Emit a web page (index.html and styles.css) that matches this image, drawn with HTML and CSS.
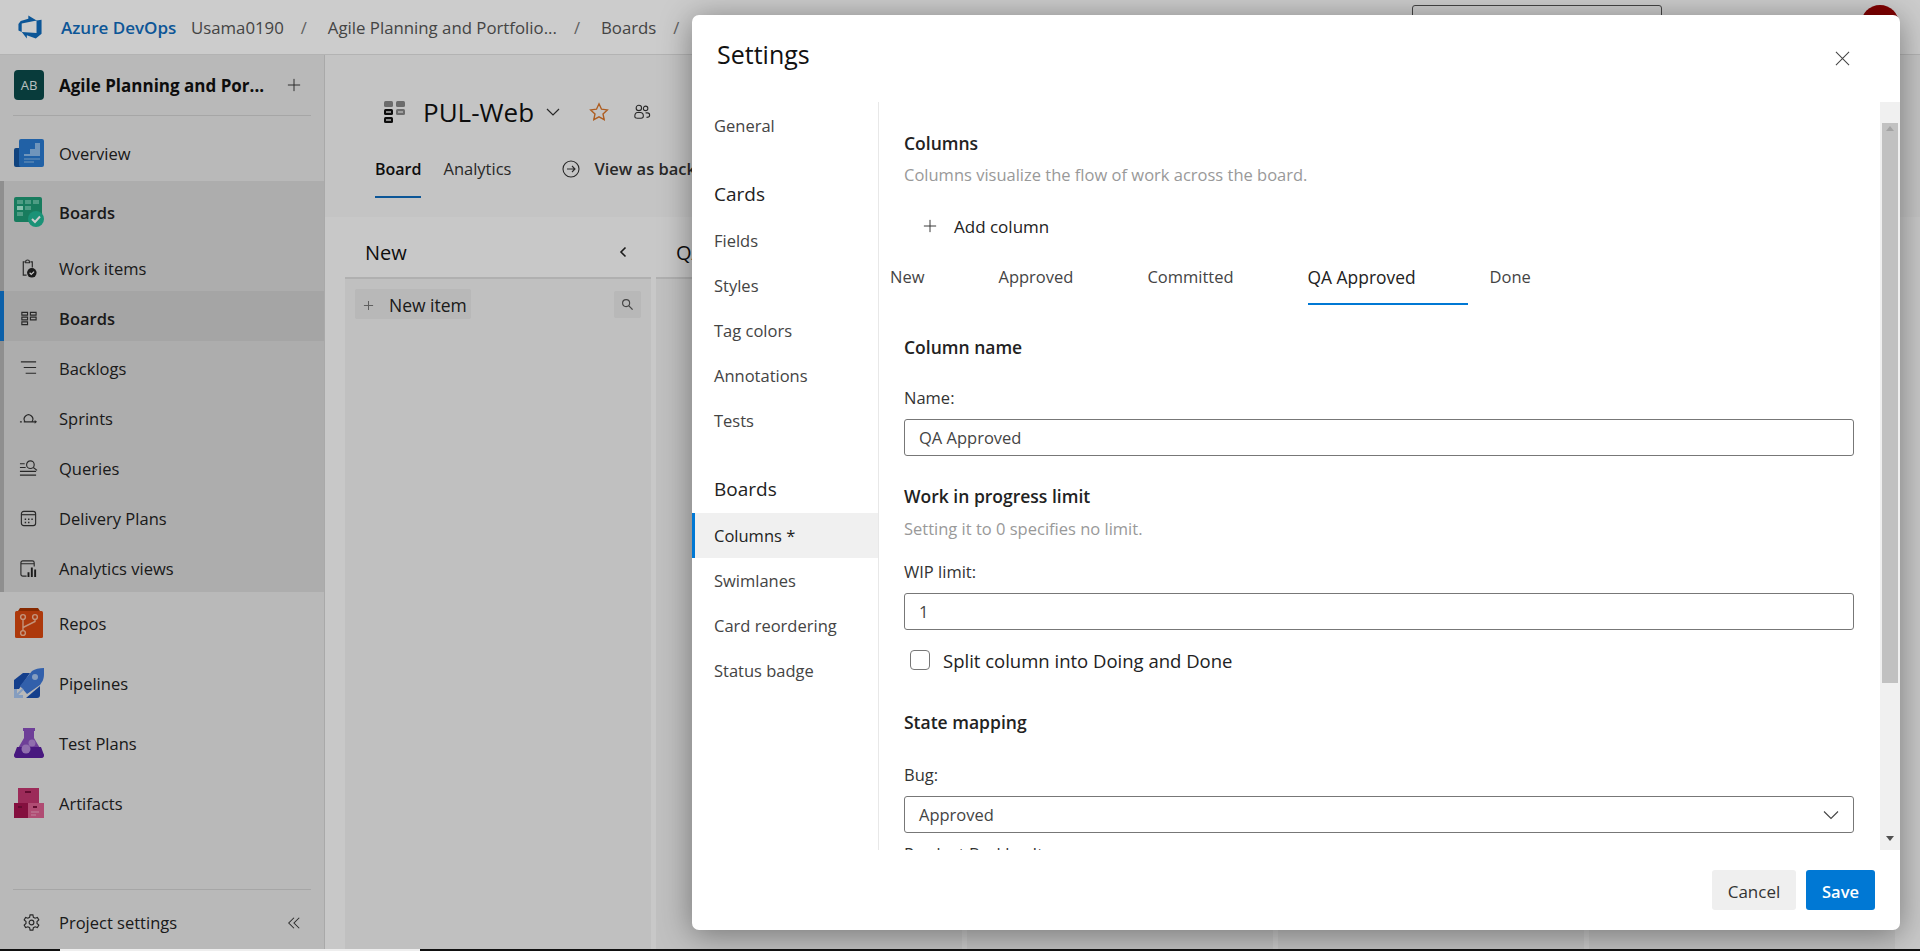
FILE: index.html
```html
<!DOCTYPE html>
<html lang="en">
<head>
    <meta charset="UTF-8">
    <meta name="viewport" content="width=device-width, initial-scale=1.0">
    <title>Settings - Boards</title>
    <link rel="stylesheet" href="styles.css">
</head>
<body>
    <header class="topbar">
        <svg class="logo" viewBox="0 0 18 18"><path fill="#0f6cbd" d="M17 4v9.74l-4 3.28-6.2-2.26V17L3.29 12.41l10.23.8V4.44zm-3.41.49L7.85 1v2.29L2.58 4.84 1 6.87v4.61l2.26 1V6.57z"/></svg>
        <span class="brand">Azure DevOps</span>
        <span class="crumb crumb-org">Usama0190</span>
        <span class="slash">/</span>
        <span class="crumb">Agile Planning and Portfolio...</span>
        <span class="slash">/</span>
        <span class="crumb">Boards</span>
        <span class="slash">/</span>
        <div class="search-box"></div>
        <div class="avatar"></div>
    </header>

    <div class="layout">
        <aside class="sidebar">
            <div class="project">
                <div class="project-badge">AB</div>
                <span class="project-name">Agile Planning and Por...</span>
                <svg class="project-add" viewBox="0 0 16 16"><path d="M8 1v14M1 8h14" stroke="#333" stroke-width="1.1" fill="none"/></svg>
            </div>
            <div class="hub hub-big hub-overview">
                <svg class="hub-icon" viewBox="0 0 30 28">
                    <rect x="0" y="9" width="12" height="19" rx="2" fill="#14549e"/>
                    <rect x="5" y="0" width="25" height="28" rx="2" fill="#2a7ad0"/>
                    <path d="M10 15h6v-5h5V4h5v13H10z" fill="#8dbbea"/>
                    <path d="M10 20h16M10 23h10" stroke="#8dbbea" stroke-width="1.2"/>
                </svg>
                <span>Overview</span>
            </div>
            <div class="section">
                <div class="hub hub-head">
                    <svg class="hub-icon" viewBox="0 0 30 30">
                        <rect x="0" y="0" width="28" height="25" rx="2" fill="#1f9b76"/>
                        <path d="M3 3h6v4H3zM11 3h6v4h-6zM19 3h6v4h-6zM11 9h6v4h-6zM3 15h6v4H3z" fill="#62c4a6"/>
                        <path d="M3 9h6v4H3z" fill="#a8efd8"/>
                        <circle cx="22" cy="22" r="8" fill="#22b795"/>
                        <path d="M18 22l3 3 5-5.500" stroke="#fff" stroke-width="2" fill="none"/>
                    </svg>
                    <span>Boards</span>
                </div>
                <div class="hub sub">
                    <svg class="sub-icon" viewBox="0 0 20 20">
                        <path d="M6 3H4.500v14H8M12 3h2v6M7 3a2 2 0 0 1 4 0v1H7z" fill="none" stroke="#333" stroke-width="1.200"/>
                        <circle cx="13.500" cy="14.500" r="5" fill="#222"/>
                        <path d="M11.200 14.500l1.700 1.700 3-3" fill="none" stroke="#fff" stroke-width="1.200"/>
                    </svg>
                    <span>Work items</span>
                </div>
                <div class="hub sub selected">
                    <svg class="sub-icon" viewBox="0 0 20 20">
                        <path d="M3 3.500h6v3H3zM3 8.500h6v3H3zM3 13.500h6v3H3zM12 3.500h6v3h-6zM12 8.500h6v3h-6z" fill="none" stroke="#333" stroke-width="1.200"/>
                    </svg>
                    <span>Boards</span>
                </div>
                <div class="hub sub">
                    <svg class="sub-icon" viewBox="0 0 20 20">
                        <path d="M2 3h16M5 9h13M7 15h11" fill="none" stroke="#333" stroke-width="1.200"/>
                    </svg>
                    <span>Backlogs</span>
                </div>
                <div class="hub sub">
                    <svg class="sub-icon" viewBox="0 0 20 20">
                        <path d="M6.500 13.500a4.500 4.500 0 1 1 7 0M5 13.500h12M1 13.500h2" fill="none" stroke="#333" stroke-width="1.200"/>
                        <path d="M16.500 11.500l2.500 2-2.500 2z" fill="#333"/>
                    </svg>
                    <span>Sprints</span>
                </div>
                <div class="hub sub">
                    <svg class="sub-icon" viewBox="0 0 20 20">
                        <path d="M1 5h5M1 9h6M1 13h17M1 17h17" fill="none" stroke="#333" stroke-width="1.200"/>
                        <circle cx="12" cy="6" r="4" fill="none" stroke="#333" stroke-width="1.200"/>
                        <path d="M15 9l4 3" stroke="#333" stroke-width="1.200"/>
                    </svg>
                    <span>Queries</span>
                </div>
                <div class="hub sub">
                    <svg class="sub-icon" viewBox="0 0 20 20">
                        <rect x="2.500" y="2.500" width="15" height="15" rx="2.500" fill="none" stroke="#333" stroke-width="1.200"/>
                        <path d="M2.500 6h15" stroke="#333" stroke-width="1.200"/>
                        <path d="M6 10h1.500v1.500H6zM9.500 10H11v1.500H9.500zM13 10h1.500v1.500H13zM6 13.500h1.500V15H6zM9.500 13.500H11V15H9.500z" fill="#333"/>
                    </svg>
                    <span>Delivery Plans</span>
                </div>
                <div class="hub sub">
                    <svg class="sub-icon" viewBox="0 0 20 20">
                        <path d="M8 18H4a2 2 0 0 1-2-2V4a2 2 0 0 1 2-2h10a2 2 0 0 1 2 2v4M2 5h14" fill="none" stroke="#333" stroke-width="1.200"/>
                        <path d="M9 14h2v5H9zM12.500 9h2v10h-2zM16 11h2v8h-2z" fill="#222"/>
                    </svg>
                    <span>Analytics views</span>
                </div>
            </div>
            <div class="hub hub-big">
                <svg class="hub-icon" viewBox="0 0 30 30">
                    <path d="M4 3l2-3h18l2 3z" fill="#a83400"/>
                    <rect x="1" y="3" width="28" height="27" rx="1.500" fill="#d9480f"/>
                    <g fill="none" stroke="#f4b99b" stroke-width="1.400">
                        <circle cx="9" cy="9" r="2.400"/>
                        <circle cx="21" cy="9" r="2.400"/>
                        <circle cx="9" cy="25" r="2.400"/>
                        <path d="M9 11.500v11M21 11.500v2l-12 6"/>
                    </g>
                </svg>
                <span>Repos</span>
            </div>
            <div class="hub hub-big">
                <svg class="hub-icon" viewBox="0 0 30 30">
                    <path d="M0 12L9 5h7L5 21H0z" fill="#1a4fb0"/>
                    <path d="M12 30l14-12v9a3 3 0 0 1-3 3z" fill="#1a4fb0"/>
                    <path d="M6 18L18 3c3-2 7-3 12-3v6c0 6-2 8-4 11L13 26z" fill="#3f78d6"/>
                    <circle cx="21" cy="9" r="3" fill="#a7c5ef"/>
                    <path d="M0 21h3v6h6v3H0z" fill="#a7c5ef"/>
                    <path d="M3 27l6-6" stroke="#a7c5ef" stroke-width="2"/>
                </svg>
                <span>Pipelines</span>
            </div>
            <div class="hub hub-big">
                <svg class="hub-icon" viewBox="0 0 30 30">
                    <path d="M9 0h12v3h-1v7l10 17c0 2-1 3-3 3H3c-2 0-3-1-3-3l10-17V3H9z" fill="#8a4fbe"/>
                    <path d="M3 19h24l3 8c0 2-1 3-3 3H3c-2 0-3-1-3-3z" fill="#5a1f9f"/>
                    <circle cx="18" cy="15" r="3.500" fill="#b48ad9"/>
                    <circle cx="12" cy="21" r="4.500" fill="#b48ad9"/>
                </svg>
                <span>Test Plans</span>
            </div>
            <div class="hub hub-big">
                <svg class="hub-icon" viewBox="0 0 30 30">
                    <rect x="4" y="0" width="21" height="16" fill="#c43670"/>
                    <rect x="0" y="15" width="15" height="15" fill="#a6144f"/>
                    <rect x="14" y="15" width="16" height="15" fill="#dc5f90"/>
                    <path d="M11 3h6v2h-6zM4 18h4v2H4zM19 18h4v2h-4z" fill="#7c0f3c"/>
                    <path d="M17 24h8M17 27h5" stroke="#f0a5c4" stroke-width="1.100"/>
                </svg>
                <span>Artifacts</span>
            </div>
            <div class="sidebar-foot">
                <svg class="sub-icon" viewBox="0 0 20 20">
                    <path d="M8.500 2h3l.5 2.500 1.800 1 2.400-.8 1.500 2.600-1.900 1.700v2l1.900 1.700-1.500 2.600-2.400-.8-1.800 1-.5 2.500h-3l-.5-2.500-1.800-1-2.400.8-1.500-2.600 1.900-1.700v-2L2.300 7.300l1.500-2.600 2.400.8 1.800-1z" fill="none" stroke="#333" stroke-width="1.200"/>
                    <circle cx="10" cy="10" r="2.500" fill="none" stroke="#333" stroke-width="1.200"/>
                </svg>
                <span>Project settings</span>
                <svg class="collapse" viewBox="0 0 16 16"><path d="M8 2L2 8l6 6M14 2L8 8l6 6" fill="none" stroke="#333" stroke-width="1.200"/></svg>
            </div>
        </aside>

        <main class="main">
            <div class="main-head">
                <div class="board-title">
                    <svg class="board-icon" viewBox="0 0 22 22">
                        <rect x="0" y="0" width="9" height="6" rx="1.500" fill="#888"/>
                        <rect x="12" y="0" width="9" height="6" rx="1.500" fill="#888"/>
                        <rect x="0" y="8" width="9" height="6" rx="1.500" fill="#111"/>
                        <rect x="12" y="8" width="9" height="6" rx="1.500" fill="#888"/>
                        <rect x="0" y="16" width="9" height="6" rx="1.500" fill="#111"/>
                        <path d="M2 11h5M2 19h5M14 11h5" stroke="#ddd" stroke-width="1.500"/>
                    </svg>
                    <span class="board-name">PUL-Web</span>
                    <svg class="board-chevron" viewBox="0 0 16 16"><path d="M2 5l6 6 6-6" fill="none" stroke="#333" stroke-width="1.200"/></svg>
                    <svg class="board-star" viewBox="0 0 20 20"><path d="M10 1.800l2.500 5.400 5.800.7-4.300 4 1.200 5.800L10 14.800l-5.200 2.900L6 11.900l-4.300-4 5.800-.7z" fill="none" stroke="#d9752a" stroke-width="1.400"/></svg>
                    <svg class="board-team" viewBox="0 0 20 20">
                        <g fill="none" stroke="#333" stroke-width="1.200">
                            <circle cx="6.500" cy="5.500" r="3"/>
                            <circle cx="14" cy="6" r="2.500"/>
                            <path d="M2 15c0-3 1-4.500 3-4.500h3c2 0 3.500 1.500 3.500 4 0 1.500-1 2.500-2.500 2.500H5c-2 0-3-.5-3-2zM14 11h2c1.500 0 2.500 1 2.500 2.500S17 16 15 16"/>
                        </g>
                    </svg>
                </div>
                <nav class="board-tabs">
                    <span class="board-tab active">Board</span>
                    <span class="board-tab">Analytics</span>
                    <svg class="arrow-icon" viewBox="0 0 18 18"><circle cx="9" cy="9" r="8" fill="none" stroke="#333" stroke-width="1.100"/><path d="M5 9h8M10 6l3 3-3 3" fill="none" stroke="#333" stroke-width="1.100"/></svg>
                    <span class="board-tab view-as">View as backlog</span>
                </nav>
            </div>
            <div class="board">
                <section class="col">
                    <div class="col-head">
                        <span>New</span>
                        <svg class="col-chevron" viewBox="0 0 10 14"><path d="M7.500 2.500L3 7l4.500 4.500" fill="none" stroke="#222" stroke-width="1.600"/></svg>
                    </div>
                    <div class="col-body">
                        <div class="new-item">
                            <svg class="new-plus" viewBox="0 0 12 12"><path d="M6 1v10M1 6h10" stroke="#777" stroke-width="1.100"/></svg>
                            <span>New item</span>
                        </div>
                        <div class="col-search">
                            <svg viewBox="0 0 14 14"><circle cx="5.500" cy="5.500" r="3.800" fill="none" stroke="#555" stroke-width="1.200"/><path d="M8.500 8.500l4 4" stroke="#555" stroke-width="1.400"/></svg>
                        </div>
                    </div>
                </section>
                <section class="col">
                    <div class="col-head"><span>QA Approved</span></div>
                    <div class="col-body"></div>
                </section>
                <section class="col"><div class="col-head"></div><div class="col-body"></div></section>
                <section class="col"><div class="col-head"></div><div class="col-body"></div></section>
                <section class="col"><div class="col-head"></div><div class="col-body"></div></section>
            </div>
        </main>
    </div>

    <div class="taskbar">
        <span class="task-dark task-a"></span>
        <span class="task-light task-b"></span>
        <span class="task-dark task-c"></span>
    </div>

    <div class="backdrop"></div>

    <div class="dialog">
        <div class="dialog-head">
            <h2>Settings</h2>
            <svg class="dialog-close" viewBox="0 0 16 16"><path d="M1 1l14 14M15 1L1 15" stroke="#444" stroke-width="1.100"/></svg>
        </div>
        <div class="dialog-body">
            <nav class="settings-nav">
                <a class="nav-item nav-first">General</a>
                <div class="nav-group">Cards</div>
                <a class="nav-item">Fields</a>
                <a class="nav-item">Styles</a>
                <a class="nav-item">Tag colors</a>
                <a class="nav-item">Annotations</a>
                <a class="nav-item">Tests</a>
                <div class="nav-group">Boards</div>
                <a class="nav-item current">Columns *</a>
                <a class="nav-item">Swimlanes</a>
                <a class="nav-item">Card reordering</a>
                <a class="nav-item">Status badge</a>
            </nav>
            <div class="settings-pane">
                <h3 class="h-columns">Columns</h3>
                <p class="hint hint-columns">Columns visualize the flow of work across the board.</p>
                <div class="add-column">
                    <svg viewBox="0 0 16 16"><path d="M8 1v14M1 8h14" stroke="#333" stroke-width="1.100"/></svg>
                    <span>Add column</span>
                </div>
                <div class="col-tabs">
                    <span class="col-tab">New</span>
                    <span class="col-tab">Approved</span>
                    <span class="col-tab">Committed</span>
                    <span class="col-tab active">QA Approved</span>
                    <span class="col-tab">Done</span>
                </div>
                <h3 class="h-name">Column name</h3>
                <label class="field-label label-name">Name:</label>
                <div class="text-field">QA Approved</div>
                <h3 class="h-wip">Work in progress limit</h3>
                <p class="hint hint-wip">Setting it to 0 specifies no limit.</p>
                <label class="field-label label-wip">WIP limit:</label>
                <div class="text-field">1</div>
                <div class="check-row">
                    <span class="check-box"></span>
                    <span>Split column into Doing and Done</span>
                </div>
                <h3 class="h-state">State mapping</h3>
                <label class="field-label label-bug">Bug:</label>
                <div class="text-field select-field">
                    <span>Approved</span>
                    <svg viewBox="0 0 16 16"><path d="M1 4.500l7 7 7-7" fill="none" stroke="#444" stroke-width="1.100"/></svg>
                </div>
                <label class="field-label label-pbi">Product Backlog Item:</label>
            </div>
            <div class="scrollbar">
                <span class="scroll-up"></span>
                <span class="scroll-thumb"></span>
                <span class="scroll-space"></span>
                <span class="scroll-down"></span>
            </div>
        </div>
        <div class="dialog-foot">
            <button class="btn btn-cancel">Cancel</button>
            <button class="btn btn-save">Save</button>
        </div>
    </div>
</body>
</html>
```

FILE: styles.css
```css
* {
    box-sizing: border-box;
}
html, body {
    margin: 0;
    height: 100%;
}
body {
    width: 1920px;
    height: 951px;
    overflow: hidden;
    display: flex;
    flex-direction: column;
    font-family: 'Open Sans', 'Noto Sans', sans-serif;
    font-size: 16.5px;
    color: #222;
    background: #fff;
}

/* top bar */
.topbar {
    height: 55px;
    flex: none;
    display: flex;
    align-items: center;
    padding-left: 17px;
    background: #fff;
    border-bottom: 1px solid #e0e0e0;
    color: #555;
}
.logo {
    width: 26px;
    height: 26px;
    margin-right: 18px;
}
.brand {
    font-size: 17px;
    font-weight: 600;
    color: #0f6cbd;
    width: 130px;
    white-space: nowrap;
}
.crumb {
    font-size: 16.8px;
    white-space: nowrap;
}
.slash {
    margin: 0 21px 0 17px;
    color: #777;
}
.search-box {
    position: absolute;
    left: 1412px;
    top: 5px;
    width: 250px;
    height: 36px;
    border: 1px solid #555;
    border-radius: 3px;
}
.avatar {
    position: absolute;
    left: 1861px;
    top: 5px;
    width: 38px;
    height: 38px;
    border-radius: 50%;
    background: #a00000;
}

.layout {
    flex: 1;
    display: flex;
    min-height: 0;
}

/* sidebar */
.sidebar {
    width: 325px;
    flex: none;
    display: flex;
    flex-direction: column;
    background: #e8e8e8;
    border-right: 1px solid #d4d4d4;
}
.project {
    height: 61px;
    margin: 0 13px;
    flex: none;
    display: flex;
    align-items: center;
    padding: 0 0 0 1px;
    border-bottom: 1px solid #d0d0d0;
}
.project-badge {
    width: 30px;
    height: 30px;
    border-radius: 4px;
    background: #0b4a4a;
    color: #e6f0f0;
    font-size: 13px;
    display: flex;
    align-items: center;
    justify-content: center;
    margin-right: 15px;
    flex: none;
}
.project-name {
    font-size: 17px;
    font-weight: 700;
    color: #111;
    width: 228px;
    white-space: nowrap;
}
.project-add {
    width: 14px;
    height: 14px;
}
.hub {
    display: flex;
    align-items: center;
    flex: none;
    color: #222;
}
.hub-big {
    height: 60px;
    padding-left: 14px;
}
.hub-overview {
    height: 65px;
    padding-top: 9px;
}
.hub-icon {
    width: 30px;
    height: 30px;
    margin-right: 15px;
    flex: none;
}
.section {
    margin-bottom: 1px;
    padding-bottom: 1px;
    background: #d9d9d9;
    border-left: 4px solid #b3b3b3;
}
.hub-head {
    height: 60px;
    padding: 2px 0 0 10px;
    font-weight: 600;
}
.sub {
    height: 50px;
    padding: 4px 0 0 10px;
}
.sub .sub-icon {
    margin: 0 21px 0 5px;
}
.sub-icon {
    width: 19px;
    height: 19px;
    flex: none;
}
.selected {
    position: relative;
    background: #cfcfcf;
    font-weight: 600;
}
.selected::before {
    content: '';
    position: absolute;
    left: -4px;
    top: 0;
    bottom: 0;
    width: 4px;
    background: #0f78d4;
}
.sidebar-foot {
    margin: auto 13px 0;
    height: 60px;
    flex: none;
    display: flex;
    align-items: center;
    padding: 6px 0 0 9px;
    border-top: 1px solid #d0d0d0;
}
.sidebar-foot .sub-icon {
    margin-right: 18px;
}
.collapse {
    width: 14px;
    height: 14px;
    margin-left: auto;
    margin-right: 10px;
}

/* board behind the dialog */
.main {
    flex: 1;
    display: flex;
    flex-direction: column;
    min-width: 0;
    background: #fbfbfb;
}
.main-head {
    height: 162px;
    flex: none;
    background: #f6f6f6;
    padding-left: 50px;
}
.board-title {
    height: 52px;
    padding-top: 31px;
    box-sizing: content-box;
    display: flex;
    align-items: center;
    padding-left: 9px;
}
.board-icon {
    width: 22px;
    height: 22px;
    margin-right: 17px;
}
.board-name {
    font-size: 26px;
    font-weight: 500;
    color: #111;
    width: 122px;
    white-space: nowrap;
}
.board-chevron {
    width: 16px;
    height: 16px;
    margin-right: 28px;
}
.board-star {
    width: 20px;
    height: 20px;
    margin-right: 24px;
}
.board-team {
    width: 18px;
    height: 18px;
}
.board-tabs {
    height: 60px;
    display: flex;
    align-items: center;
    padding-top: 1px;
}
.board-tab {
    white-space: nowrap;
    color: #333;
}
.board-tab.active {
    position: relative;
    font-size: 16px;
    font-weight: 600;
    color: #111;
    margin-right: 22px;
}
.board-tab.active::after {
    content: '';
    position: absolute;
    left: 0;
    right: 0;
    bottom: -18px;
    height: 2px;
    background: #0f6cbd;
}
.arrow-icon {
    width: 18px;
    height: 18px;
    margin: 0 14px 0 51px;
}
.view-as {
    font-weight: 600;
}
.board {
    flex: 1;
    display: flex;
    gap: 5px;
    padding-left: 20px;
    min-height: 0;
}
.col {
    width: 306px;
    flex: none;
    display: flex;
    flex-direction: column;
}
.col-head {
    height: 60px;
    flex: none;
    display: flex;
    align-items: center;
    justify-content: space-between;
    padding: 10px 23px 0 20px;
    font-size: 20px;
    color: #111;
    white-space: nowrap;
}
.col-chevron {
    width: 10px;
    height: 14px;
}
.col-body {
    flex: 1;
    background: #f0f0f0;
    border-top: 2px solid #dcdcdc;
    display: flex;
    align-items: flex-start;
    justify-content: space-between;
    padding: 10px 10px 0;
}
.new-item {
    width: 116px;
    height: 30px;
    display: flex;
    align-items: center;
    padding: 2px 0 0 8px;
    background: #e6e6e6;
    border-radius: 2px;
    font-size: 17.5px;
    font-weight: 500;
    white-space: nowrap;
}
.new-plus {
    width: 11px;
    height: 11px;
    margin-right: 15px;
    flex: none;
}
.col-search {
    width: 27px;
    height: 27px;
    margin-top: 2px;
    background: #e6e6e6;
    border-radius: 2px;
    display: flex;
    align-items: center;
    justify-content: center;
}
.col-search svg {
    width: 13px;
    height: 13px;
}

.taskbar {
    height: 2px;
    flex: none;
    display: flex;
    position: relative;
    z-index: 5;
}
.task-dark {
    background: #111;
}
.task-light {
    background: #eee;
}
.task-a {
    width: 60px;
}
.task-b {
    width: 360px;
}
.task-c {
    flex: 1;
}

/* dialog */
.backdrop {
    position: absolute;
    left: 0;
    top: 0;
    width: 1920px;
    height: 951px;
    background: rgba(0, 0, 0, 0.2);
}
.dialog {
    position: absolute;
    left: 692px;
    top: 15px;
    width: 1208px;
    height: 915px;
    display: flex;
    flex-direction: column;
    background: #fff;
    border-radius: 7px;
    box-shadow: 0 4px 32px rgba(0, 0, 0, 0.4);
}
.dialog-head {
    height: 87px;
    flex: none;
    display: flex;
    justify-content: space-between;
    padding: 21px 50px 0 25px;
}
.dialog-head h2 {
    margin: 0;
    font-size: 25px;
    line-height: 36px;
    font-weight: 500;
    color: #111;
}
.dialog-close {
    width: 15px;
    height: 15px;
    margin-top: 15px;
}
.dialog-body {
    height: 748px;
    flex: none;
    display: flex;
}
.settings-nav {
    width: 187px;
    flex: none;
    border-right: 1px solid #e8e8e8;
    display: flex;
    flex-direction: column;
    padding-top: 1px;
}
.nav-item {
    height: 45px;
    flex: none;
    display: flex;
    align-items: center;
    padding-left: 22px;
    color: #444;
}
.nav-group {
    height: 48px;
    margin-top: 22px;
    flex: none;
    display: flex;
    align-items: center;
    padding-left: 22px;
    font-size: 19px;
    font-weight: 500;
    color: #222;
}
.current {
    background: #f0f0f0;
    border-left: 3px solid #0078d4;
    padding-left: 19px;
    font-weight: 500;
    color: #222;
}
.settings-pane {
    flex: 1;
    min-width: 0;
    overflow: hidden;
    padding: 0 26px 0 25px;
    color: #333;
}
.settings-pane h3 {
    margin: 0;
    font-size: 17.5px;
    line-height: 24px;
    font-weight: 600;
    color: #222;
}
.hint {
    margin: 0;
    line-height: 24px;
    color: #999;
}
.field-label {
    display: block;
    line-height: 22px;
    color: #333;
}
.h-columns {
    margin-top: 29px !important;
}
.hint-columns {
    margin-top: 8px;
}
.add-column {
    height: 40px;
    margin-top: 19px;
    display: flex;
    align-items: center;
    padding-left: 19px;
    font-size: 17px;
    font-weight: 500;
    color: #222;
}
.add-column svg {
    width: 14px;
    height: 14px;
    margin-right: 17px;
}
.col-tabs {
    height: 50px;
    margin: 9px 0 0 -14px;
    display: flex;
}
.col-tab {
    margin-right: 74px;
    padding-top: 10px;
    color: #444;
}
.col-tab.active {
    position: relative;
    font-size: 17.4px;
    font-weight: 500;
    color: #222;
}
.col-tab.active::after {
    content: '';
    position: absolute;
    left: 0;
    right: -52px;
    bottom: 0;
    height: 2px;
    background: #0078d4;
}
.h-name {
    margin-top: 30px !important;
}
.label-name {
    margin-top: 28px;
}
.text-field {
    height: 37px;
    margin-top: 10px;
    display: flex;
    align-items: center;
    padding-left: 14px;
    border: 1px solid #777;
    border-radius: 3px;
    color: #444;
}
.h-wip {
    margin-top: 28px !important;
}
.hint-wip {
    margin-top: 9px;
}
.label-wip {
    margin-top: 20px;
}
.check-row {
    height: 30px;
    margin-top: 15px;
    display: flex;
    align-items: center;
    padding-left: 6px;
    font-size: 18.5px;
    font-weight: 500;
    color: #222;
}
.check-box {
    width: 20px;
    height: 20px;
    margin-right: 13px;
    border: 1px solid #777;
    border-radius: 4px;
}
.h-state {
    margin-top: 35px !important;
}
.label-bug {
    margin-top: 30px;
}
.select-field {
    justify-content: space-between;
    padding-right: 14px;
}
.select-field svg {
    width: 16px;
    height: 16px;
}
.label-pbi {
    margin-top: 10px;
}
.scrollbar {
    width: 20px;
    flex: none;
    background: #f0f0f0;
    display: flex;
    flex-direction: column;
    align-items: center;
}
.scroll-up {
    height: 21px;
    flex: none;
    width: 0;
    border-left: 4px solid transparent;
    border-right: 4px solid transparent;
    border-bottom: 5px solid #a3a3a3;
    transform: translateY(8px);
}
.scroll-thumb {
    width: 16px;
    height: 560px;
    flex: none;
    background: #c1c1c1;
}
.scroll-space {
    flex: 1;
}
.scroll-down {
    width: 0;
    height: 5px;
    flex: none;
    margin-bottom: 9px;
    border-left: 4px solid transparent;
    border-right: 4px solid transparent;
    border-top: 5px solid #505050;
}
.dialog-foot {
    flex: 1;
    display: flex;
    justify-content: flex-end;
    gap: 10px;
    padding: 20px 25px 0 0;
}
.btn {
    height: 40px;
    padding-top: 3px;
    border: none;
    border-radius: 3px;
    font-family: inherit;
    font-size: 16.5px;
    font-weight: 600;
}
.btn-cancel {
    width: 84px;
    background: #efefef;
    color: #333;
    font-size: 17px;
    font-weight: 500;
}
.btn-save {
    width: 69px;
    background: #0078d4;
    color: #fff;
}
```
